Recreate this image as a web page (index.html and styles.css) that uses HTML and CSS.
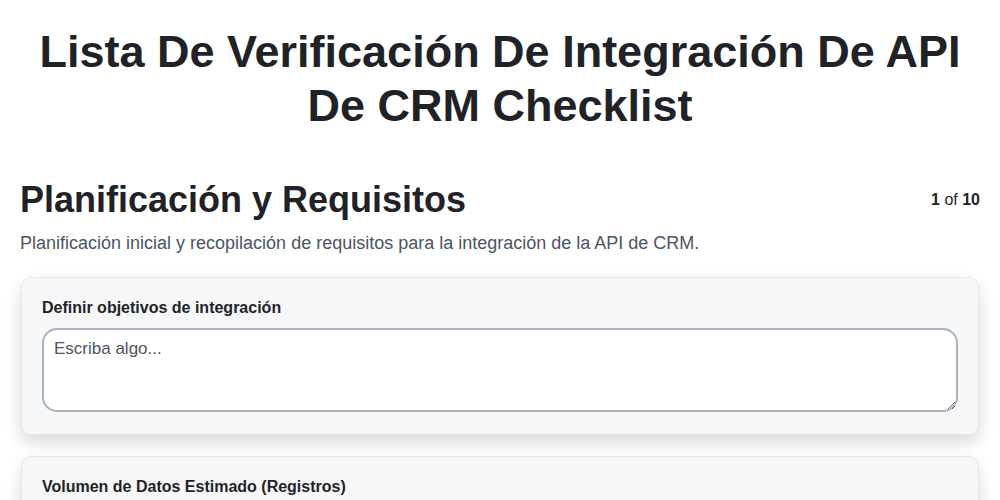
FILE: index.html
```html
<!DOCTYPE html>
<html lang="es">
<head>
    <meta charset="UTF-8">
    <meta name="viewport" content="width=device-width, initial-scale=1.0">
    <title>Lista De Verificación De Integración De API De CRM Checklist</title>
    <link rel="stylesheet" href="styles.css">
</head>
<body>
    <div class="page">
        <h1 class="page-title">Lista De Verificación De Integración De API De CRM Checklist</h1>

        <div class="section-header">
            <h2 class="section-title">Planificación y Requisitos</h2>
            <div class="step-count"><strong>1</strong> of <strong>10</strong></div>
        </div>
        <p class="section-desc">Planificación inicial y recopilación de requisitos para la integración de la API de CRM.</p>

        <div class="item-card">
            <label class="item-label" for="objetivos">Definir objetivos de integración</label>
            <textarea id="objetivos" class="item-input" placeholder="Escriba algo..."></textarea>
        </div>

        <div class="item-card">
            <label class="item-label" for="volumen">Volumen de Datos Estimado (Registros)</label>
            <input id="volumen" class="item-input item-number" type="number">
        </div>
    </div>
</body>
</html>
```

FILE: styles.css
```css
* {
    margin: 0;
    padding: 0;
    box-sizing: border-box;
}

body {
    font-family: 'Liberation Sans', Arial, sans-serif;
    background: #fff;
    color: #1f2328;
}

.page {
    padding: 0 20px;
}

.page-title {
    text-align: center;
    font-size: 45px;
    line-height: 54px;
    font-weight: 700;
    margin: 25px 0 0;
    color: #1f2328;
}

.section-header {
    display: flex;
    justify-content: space-between;
    align-items: center;
    margin-top: 46px;
}

.section-title {
    font-size: 36px;
    line-height: 42px;
    font-weight: 700;
}

.step-count {
    font-size: 16px;
    color: #1f2328;
}

.section-desc {
    margin-top: 10px;
    font-size: 18px;
    line-height: 24px;
    color: #4b5563;
}

.item-card {
    margin: 22px 1px 0;
    padding: 20px 20px 22px;
    background: #f6f7f9;
    border: 1px solid #e5e7eb;
    border-radius: 10px;
    box-shadow: 0 8px 16px rgba(0, 0, 0, 0.15);
}

.item-card + .item-card {
    margin-top: 21px;
}

.item-label {
    display: block;
    font-size: 16px;
    line-height: 20px;
    font-weight: 700;
    color: #1f2328;
    margin-bottom: 10px;
}

.item-input {
    display: block;
    width: 100%;
    height: 84px;
    padding: 9px 10px;
    font-family: 'Liberation Sans', Arial, sans-serif;
    font-size: 17px;
    line-height: 20px;
    color: #1f2328;
    background: #fff;
    border: 2px solid #aab2bb;
    border-radius: 15px;
}

.item-input::placeholder {
    color: #4b5563;
}

.item-number {
    height: 44px;
}
```
